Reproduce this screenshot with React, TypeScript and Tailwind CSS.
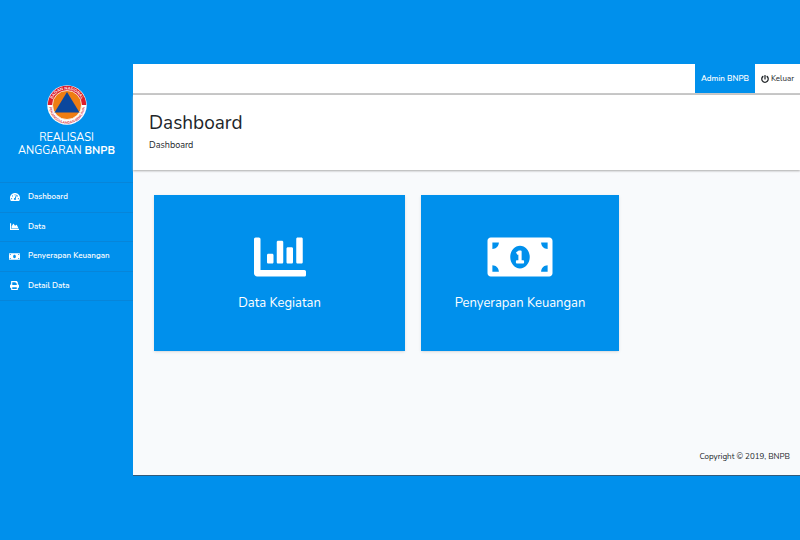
import type { ReactNode } from 'react';
import { FaChartArea, FaChartBar, FaMoneyBill, FaMoneyBillAlt, FaPowerOff, FaTachometerAlt } from 'react-icons/fa';

function Logo() {
  return (
    <svg viewBox="0 0 80 80" className="size-10" role="img" aria-label="BNPB">
      <defs>
        <path id="upper" d="M9 40A31 31 0 0 1 71 40" />
        <path id="lower" d="M4.500 42A35.500 35.500 0 0 0 75.500 42" />
      </defs>
      <circle cx="40" cy="40" r="39.500" fill="#fff" />
      <path d="M1.500 40a38.500 38.500 0 0 1 77 0z" fill="#dc1f2b" />
      <circle cx="40" cy="40" r="29" fill="#ee7d12" stroke="#fff" strokeWidth="1.500" />
      <path d="M40 14L65 55H15z" fill="#0b479d" />
      <text fill="#fff" fontSize="8" fontWeight="700" textAnchor="middle">
        <textPath href="#upper" startOffset="50%">BADAN NASIONAL</textPath>
      </text>
      <text fill="#d52a35" fontSize="7" fontWeight="700" textAnchor="middle">
        <textPath href="#lower" startOffset="50%">PENANGGULANGAN BENCANA</textPath>
      </text>
    </svg>
  );
}

function PrintIcon() {
  return (
    <svg viewBox="0 0 512 512" fill="currentColor" className="size-[9px]" aria-hidden="true">
      <path d="M464 192h-16V81.941a24 24 0 0 0-7.029-16.97L383.029 7.029A24 24 0 0 0 366.059 0H88C74.745 0 64 10.745 64 24v168H48c-26.51 0-48 21.49-48 48v132c0 6.627 5.373 12 12 12h52v104c0 13.255 10.745 24 24 24h336c13.255 0 24-10.745 24-24V384h52c6.627 0 12-5.373 12-12V240c0-26.51-21.490-48-48-48zm-80 256H128v-96h256v96zM128 224V64h192v40c0 13.200 10.800 24 24 24h40v96H128z" />
    </svg>
  );
}

function NavItem({ icon, label }: { icon: ReactNode; label: string }) {
  return (
    <li className="flex-1 border-b border-[#0785d9]">
      <a href="#" className="flex h-full items-center gap-2 pl-[9px] text-[8px] font-semibold text-white">
        <span className="flex w-[11px] justify-center text-[10px]">{icon}</span>
        {label}
      </a>
    </li>
  );
}

function Card({ icon, label }: { icon: ReactNode; label: string }) {
  return (
    <a href="#" className="flex h-39 flex-col items-center bg-[#0090ec] pt-9 text-white shadow-sm">
      <span className="text-[52px]">{icon}</span>
      <span className="mt-2 text-[13px] leading-6">{label}</span>
    </a>
  );
}

export default function App() {
  return (
    <div className="flex min-h-screen bg-[#0090ec] pt-16 pb-16 font-['Nunito','Open_Sans',sans-serif] text-[#212529]">
      <aside className="w-[133px] shrink-0 text-white">
        <div className="flex h-[119px] flex-col items-center border-b border-[#0785d9] pt-[21px]">
          <Logo />
          <h2 className="mt-[6px] text-center text-[11px] leading-[13px]">
            REALISASI
            <br />
            ANGGARAN <b>BNPB</b>
          </h2>
        </div>
        <nav>
          <ul className="flex h-[118px] flex-col">
            <NavItem icon={<FaTachometerAlt />} label="Dashboard" />
            <NavItem icon={<FaChartArea className="size-[9px]" />} label="Data" />
            <NavItem icon={<FaMoneyBill className="size-[11px]" />} label="Penyerapan Keuangan" />
            <NavItem icon={<PrintIcon />} label="Detail Data" />
          </ul>
        </nav>
      </aside>
      <div className="flex min-w-0 flex-1 flex-col border-b border-[#315b7b] bg-[#f8fafc]">
        <header className="flex h-[31px] shrink-0 justify-end border-b-2 border-[#c8c8c8] bg-white text-[8px]">
          <button type="button" className="w-[60px] bg-[#0090ec] font-semibold text-white">Admin BNPB</button>
          <button type="button" className="flex w-[45px] items-center justify-center gap-[2px]">
            <FaPowerOff className="size-2" />
            Keluar
          </button>
        </header>
        <div className="h-[75px] shrink-0 bg-white px-4 pt-4 shadow-[0_1px_2px_#aaa]">
          <h1 className="text-[19px] leading-6">Dashboard</h1>
          <p className="mt-1 text-[9px] leading-3">Dashboard</p>
        </div>
        <main className="grid flex-1 grid-cols-[251fr_198fr_149fr] content-start gap-4 pt-[25px] pr-4 pl-[21px]">
          <Card icon={<FaChartBar />} label="Data Kegiatan" />
          <Card icon={<FaMoneyBillAlt className="h-[52px] w-[66px]" />} label="Penyerapan Keuangan" />
        </main>
        <footer className="px-[10px] pb-3 text-right text-[8px] leading-3">Copyright © 2019, BNPB</footer>
      </div>
    </div>
  );
}
